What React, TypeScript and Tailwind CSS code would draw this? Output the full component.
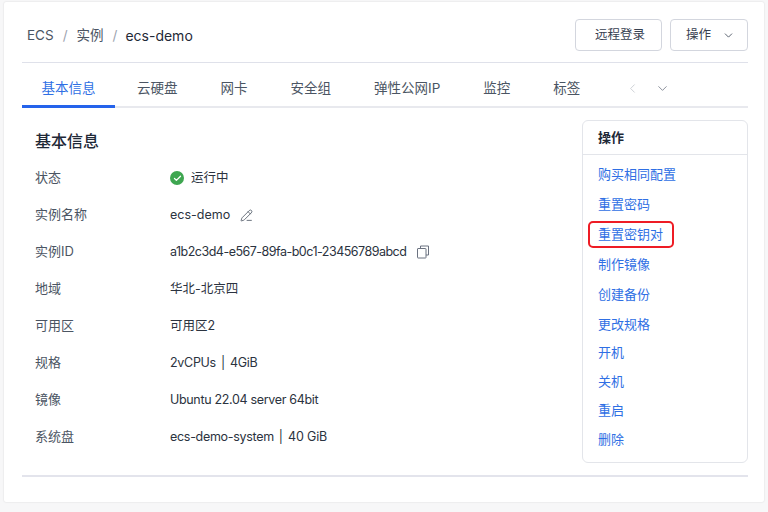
import React from "react";
import { Check, ChevronDown, ChevronLeft, PencilLine } from "lucide-react";

const tabs = ["云硬盘", "网卡", "安全组", "弹性公网IP", "监控", "标签"];

const actions = ["购买相同配置", "重置密码", "重置密钥对", "制作镜像", "创建备份", "更改规格"];
const powerActions = ["开机", "关机", "重启", "删除"];

const Row = ({ label, children }: { label: string; children: React.ReactNode }) => (
    <div className="flex h-[37px] items-center">
        <div className="w-[135px] text-[#4b5563]">{label}</div>
        <div className="flex items-center pt-[1px] text-[12.5px] text-[#2b3340]">{children}</div>
    </div>
);

const Slash = () => <span className="mx-[9px] text-[#9ca3af]">/</span>;

const CopyIcon = () => (
    <svg width="14" height="14" viewBox="0 0 14 14" fill="none" stroke="#6b7280" strokeWidth="1" className="ml-[10px]">
        <path d="M4.5 3.5V1h8v9H10" />
        <rect x="1.5" y="3.5" width="8.5" height="9.5" rx="0.5" />
    </svg>
);

export default function App() {
    return (
        <div className="h-[512px] w-[768px] bg-[#f7f7f8] px-[4px] pt-[2px] text-[13px] [font-family:Inter,'Noto_Sans_CJK_SC',sans-serif]">
            <div className="h-[500px] rounded-[2px] bg-white pl-[18px] pr-[16px] shadow-[0_0_2px_rgba(0,0,0,0.14)]">
                {/* breadcrumb and buttons */}
                <div className="flex h-[61px] items-center justify-between border-b border-[#dfe1ea] pt-[6px]">
                    <div className="flex items-center pl-[5px] text-[13.5px] text-[#4b5563]">
                        <span>ECS</span>
                        <Slash />
                        <span>实例</span>
                        <Slash />
                        <span className="-ml-[1px] text-[14px] text-[#1f2937]">ecs-demo</span>
                    </div>
                    <div className="flex gap-[8px] text-[12.5px] text-[#374151]">
                        <button className="h-[32px] w-[87px] rounded-[4px] border border-[#d3d6de] bg-white pl-[3px]">远程登录</button>
                        <button className="flex h-[32px] w-[78px] items-center justify-between rounded-[4px] border border-[#d3d6de] bg-white pl-[15px] pr-[12px]">
                            操作
                            <ChevronDown size={13} strokeWidth={1.5} />
                        </button>
                    </div>
                </div>

                {/* tabs */}
                <div className="flex h-[45px] items-start border-b-2 border-[#e8e9ee] text-[13.5px] text-[#4b5563]">
                    <div className="flex h-[45px] w-[93px] shrink-0 items-center justify-center border-b-[3px] border-[#2563eb] pt-[8px] text-[#2f6fe4]">基本信息</div>
                    <div className="ml-[22px] flex gap-[43px]">
                        {tabs.map((tab) => (
                            <div key={tab} className="flex h-[43px] items-center whitespace-nowrap pt-[8px]">{tab}</div>
                        ))}
                    </div>
                    <div className="ml-[45px] flex h-[43px] items-center gap-[15px] pt-[7px]">
                        <ChevronLeft size={15} strokeWidth={1.25} className="text-[#c2c5cc]" />
                        <ChevronDown size={15} strokeWidth={1.25} className="text-[#6b7280]" />
                    </div>
                </div>

                {/* content */}
                <div className="flex h-[369px] justify-between border-b-2 border-[#e3e4ec] pt-[12px]">
                    <div className="pl-[13px]">
                        <h2 className="flex h-[39px] items-center pt-[3px] text-[16px] font-medium text-[#1f2937]">基本信息</h2>
                        <div>
                            <Row label="状态">
                                <span className="mr-[7px] flex h-[14px] w-[14px] items-center justify-center rounded-full bg-[#3ea650]">
                                    <Check size={9} strokeWidth={3.5} className="text-white" />
                                </span>
                                运行中
                            </Row>
                            <Row label="实例名称">
                                ecs-demo
                                <PencilLine size={13} strokeWidth={1.5} className="ml-[10px] text-[#4b5563]" />
                            </Row>
                            <Row label="实例ID">
                                <span className="tracking-[-0.51px]">a1b2c3d4-e567-89fa-b0c1-23456789abcd</span>
                                <CopyIcon />
                            </Row>
                            <Row label="地域">华北-北京四</Row>
                            <Row label="可用区">可用区2</Row>
                            <Row label="规格">
                                <span className="tracking-[-0.3px]">2vCPUs</span>
                                <span className="mx-[5px]">|</span>
                                <span className="tracking-[-0.3px]">4GiB</span>
                            </Row>
                            <Row label="镜像"><span className="tracking-[-0.33px]">Ubuntu 22.04 server 64bit</span></Row>
                            <Row label="系统盘">
                                <span className="tracking-[-0.3px]">ecs-demo-system</span>
                                <span className="mx-[5px]">|</span>
                                <span className="tracking-[-0.15px]">40 GiB</span>
                            </Row>
                        </div>
                    </div>

                    {/* action panel */}
                    <div className="h-[343px] w-[166px] rounded-[6px] border border-[#e3e5ea]">
                        <div className="flex h-[34px] items-center border-b border-[#e3e5ea] pl-[15px] font-semibold text-[#1f2937]">操作</div>
                        <div className="pl-[15px] pt-[5px] text-[#2f6fe4]">
                            {actions.map((item) => (
                                <div key={item} className="relative flex h-[30px] items-center">
                                    {item}
                                    {item === "重置密钥对" && (
                                        <span className="absolute left-[-10px] top-[1px] h-[27px] w-[86px] rounded-[5px] border-2 border-[#ee1c25]" />
                                    )}
                                </div>
                            ))}
                            <div className="-mt-[2px]">
                                {powerActions.map((item) => (
                                    <div key={item} className="flex h-[29px] items-center">{item}</div>
                                ))}
                            </div>
                        </div>
                    </div>
                </div>
            </div>
        </div>
    );
}
